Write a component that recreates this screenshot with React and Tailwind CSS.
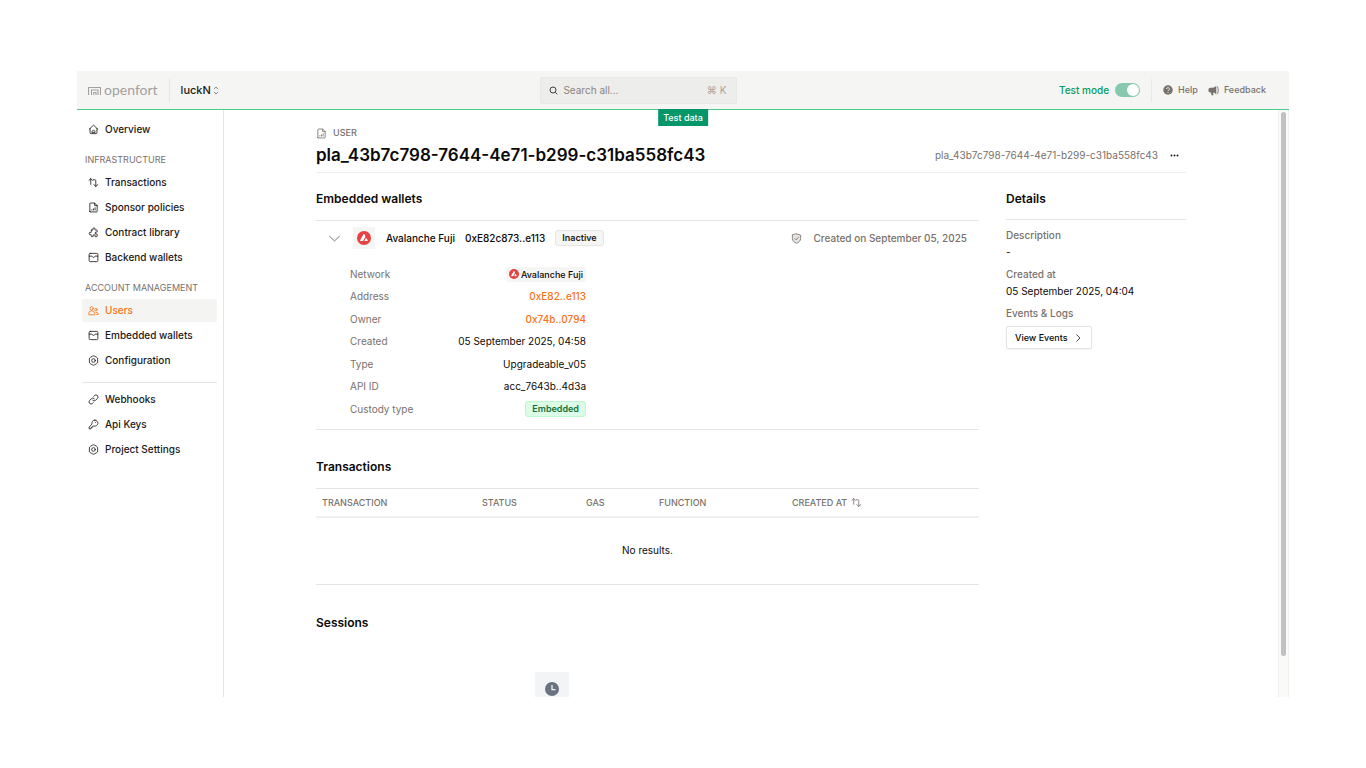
import React from "react";

function Icon({ size = "size-[11px]", className = "", children }) {
  return (
    <svg
      viewBox="0 0 24 24"
      fill="none"
      stroke="currentColor"
      strokeWidth="1.8"
      strokeLinecap="round"
      strokeLinejoin="round"
      aria-hidden="true"
      className={`shrink-0 ${size} ${className}`}
    >
      {children}
    </svg>
  );
}

const HomeIcon = () => (
  <Icon>
    <path d="M2.500 11.500 12 2.500l9.500 9" />
    <path d="M4.500 10v9a2 2 0 0 0 2 2h11a2 2 0 0 0 2-2v-9" />
    <path d="M8.500 17.500c0-2.300 1.500-3.700 3.500-3.700s3.500 1.400 3.500 3.700z" />
  </Icon>
);

const SwapIcon = ({ className }) => (
  <Icon className={className}>
    <path d="M6 16V3.500M2 7.500l4-4 4 4" />
    <path d="M11.500 6H15a2 2 0 0 1 2 2v12.500M12.500 16.500l4.500 4 4.500-4" />
  </Icon>
);

const PageIcon = ({ className }) => (
  <Icon className={className}>
    <path d="M4 20.500V3.500A1.200 1.200 0 0 1 5.200 2.300H14.500L20 7.800v12.700a1.200 1.200 0 0 1-1.200 1.200H5.200A1.200 1.200 0 0 1 4 20.500z" />
    <path d="M14.500 2.500v5.300H20M8.500 17.500v-1M12 17.500V15M15.500 17.500v-5" />
  </Icon>
);

const PuzzleIcon = () => (
  <Icon>
    <path d="M8 6.500h2.200c.6 0 .9-.6.700-1.100a2.300 2.300 0 1 1 4.200 0c-.2.500.1 1.100.7 1.100H19a1 1 0 0 1 1 1v3c0 .6-.6.900-1.100.7a2.200 2.200 0 1 0 0 4c.5-.2 1.100.1 1.100.7V20a1 1 0 0 1-1 1h-3c-.6 0-.9-.6-.7-1.100a2.200 2.200 0 1 0-4 0c.2.500-.1 1.100-.7 1.100H8a1 1 0 0 1-1-1v-2.800c0-.6-.6-.9-1.100-.7a2.300 2.300 0 1 1 0-4.200c.5.200 1.100-.1 1.100-.7V7.500a1 1 0 0 1 1-1z" />
  </Icon>
);

const WalletIcon = () => (
  <Icon>
    <rect x="2.500" y="3" width="19" height="18" rx="2.500" />
    <path d="M2.500 9h6c.5 0 .8.300.9.800.4 1.300 1.300 2 2.600 2s2.200-.7 2.600-2c.1-.5.400-.8.900-.8h6" />
  </Icon>
);

const UsersIcon = () => (
  <Icon>
    <circle cx="8" cy="7.500" r="3.700" />
    <path d="M1.500 20.500v-1.500a6.500 6.500 0 0 1 13 0v1.500z" />
    <circle cx="17.500" cy="10" r="2.700" />
    <path d="M17.500 15.500a5 5 0 0 1 5 5h-4" />
  </Icon>
);

const SettingsIcon = () => (
  <Icon>
    <path d="M10.300 2.200a3.500 3.500 0 0 1 3.400 0l5.600 3.200a3.300 3.300 0 0 1 1.700 2.900v7.400a3.300 3.300 0 0 1-1.700 2.900l-5.600 3.200a3.500 3.500 0 0 1-3.400 0l-5.600-3.200A3.300 3.300 0 0 1 3 15.700V8.300a3.300 3.300 0 0 1 1.700-2.900z" />
    <circle cx="12" cy="12" r="4" />
  </Icon>
);

const LinkIcon = () => (
  <Icon>
    <path d="M13.800 10.200a4.500 4.500 0 0 0-6.400 0l-3.800 3.900a4.500 4.500 0 0 0 6.400 6.400l1.600-1.700" />
    <path d="M10.200 13.800a4.500 4.500 0 0 0 6.400 0l3.800-3.900A4.500 4.500 0 0 0 14 3.500l-1.600 1.700" />
  </Icon>
);

const KeyIcon = () => (
  <Icon>
    <path d="M15 2.500a6.500 6.500 0 0 0-6.200 8.400L2.500 17.500V21.500h4v-2.500h2.500v-2.500l4.100-1.300A6.500 6.500 0 1 0 15 2.500z" />
    <path d="M16.500 7.500h.1" />
  </Icon>
);

function AvalancheLogo({ size }) {
  return (
    <svg viewBox="0 0 28 28" className={`shrink-0 ${size}`} aria-hidden="true">
      <circle cx="14" cy="14" r="14" fill="#e84142" />
      <path
        fill="#fff"
        d="M13 6.600c.5-.9 1.500-.9 2 0l1.500 2.800c.4.800.4 1.600 0 2.400l-4 7.100c-.4.800-1.100 1.200-2 1.200H7.300c-1.100 0-1.600-.8-1-1.800zM17.300 14.900c.5-.8 1.400-.8 1.900 0l2.200 3.600c.5.900.1 1.600-.9 1.600h-4.400c-1.100 0-1.500-.8-.9-1.700z"
      />
    </svg>
  );
}

function NavItem({ icon, children, active }) {
  return (
    <li>
      <a
        href="#"
        aria-current={active ? "page" : undefined}
        className={`flex h-[23px] items-center gap-[6px] rounded-[2px] px-[6px] text-[10px] font-medium ${
          active ? "bg-[#f4f4f3] text-[#f97316]" : "text-[#1c1917]"
        }`}
      >
        {icon}
        {children}
      </a>
    </li>
  );
}

function NavLabel({ children }) {
  return (
    <h2 className="px-[3px] pt-3 pb-[5px] text-[9px] leading-[13px] text-[#78716c] uppercase">
      {children}
    </h2>
  );
}

function Sidebar() {
  return (
    <nav className="w-[147px] shrink-0 border-r border-[#e7e5e4] pt-[8px] pr-[6px] pl-[5px]">
      <ul className="flex flex-col gap-[2px]">
        <NavItem icon={<HomeIcon />}>Overview</NavItem>
      </ul>
      <NavLabel>Infrastructure</NavLabel>
      <ul className="flex flex-col gap-[2px]">
        <NavItem icon={<SwapIcon />}>Transactions</NavItem>
        <NavItem icon={<PageIcon />}>Sponsor policies</NavItem>
        <NavItem icon={<PuzzleIcon />}>Contract library</NavItem>
        <NavItem icon={<WalletIcon />}>Backend wallets</NavItem>
      </ul>
      <NavLabel>Account management</NavLabel>
      <ul className="flex flex-col gap-[2px]">
        <NavItem icon={<UsersIcon />} active>
          Users
        </NavItem>
        <NavItem icon={<WalletIcon />}>Embedded wallets</NavItem>
        <NavItem icon={<SettingsIcon />}>Configuration</NavItem>
      </ul>
      <hr className="mt-[10px] mb-[5px] border-[#e7e5e4]" />
      <ul className="flex flex-col gap-[2px]">
        <NavItem icon={<LinkIcon />}>Webhooks</NavItem>
        <NavItem icon={<KeyIcon />}>Api Keys</NavItem>
        <NavItem icon={<SettingsIcon />}>Project Settings</NavItem>
      </ul>
    </nav>
  );
}

function Header() {
  return (
    <header className="relative flex h-[39px] shrink-0 items-center justify-between border-b border-[#4fca8f] bg-[#f5f5f4] pr-[23px] pl-[11px]">
      <div className="flex items-center">
        <a href="#" className="flex items-center gap-[3px] text-[#a3a09e]">
          <svg viewBox="0 0 26 18" className="h-[9px] w-[13px]" fill="none" stroke="currentColor" strokeWidth="2.200" aria-hidden="true">
            <path d="M1 18V3h24v15" />
            <path d="M7 18V8h13v10" />
            <path d="M11.500 18v-5h4.500v5" />
          </svg>
          <span className="font-['Lato',sans-serif] text-[14px] leading-[18px]">openfort</span>
        </a>
        <span className="mr-[11px] ml-[11px] h-[23px] w-px bg-[#e7e5e4]" />
        <button type="button" className="flex items-center gap-[2px] text-[11px] font-medium text-[#1c1917]">
          luckN
          <svg viewBox="0 0 12 20" className="h-[9px] w-[6px] text-[#78716c]" fill="none" stroke="currentColor" strokeWidth="1.800" aria-hidden="true">
            <path d="M1.500 7 6 2l4.500 5M1.500 13 6 18l4.500-5" />
          </svg>
        </button>
      </div>

      <label className="flex h-[27px] w-[197px] items-center rounded-[2px] border border-[#e9e8e7] bg-[#ededec] px-[8px]">
        <svg viewBox="0 0 18 18" className="size-[9px] shrink-0 text-[#44403c]" fill="none" stroke="currentColor" strokeWidth="2" aria-hidden="true">
          <circle cx="8" cy="8" r="6" />
          <path d="m12.500 12.500 4 4" />
        </svg>
        <input
          type="text"
          aria-label="Search all"
          placeholder="Search all..."
          className="ml-[5px] w-full min-w-0 flex-1 bg-transparent text-[10px] text-[#1c1917] outline-none placeholder:text-[#8a8580]"
        />
        <kbd className="mr-[2px] shrink-0 font-['Inter','DejaVu_Sans',sans-serif] text-[10px] text-[#a8a29e]">⌘ K</kbd>
      </label>

      <div className="flex items-center">
        <label className="flex items-center gap-[6px] text-[10px] font-medium text-[#059a63]">
          Test mode
          <input
            type="checkbox"
            role="switch"
            defaultChecked
            className="flex h-[14px] w-[25px] appearance-none items-center justify-end rounded-full bg-[#87c9ae] px-px before:size-[12px] before:rounded-full before:bg-white before:content-['']"
          />
        </label>
        <span className="mx-[11px] h-[23px] w-px bg-[#ebe9e8]" />
        <div className="flex items-center gap-[10px] text-[9px] font-medium text-[#78716c]">
          <a href="#" className="flex items-center gap-[5px]">
            <svg viewBox="0 0 20 20" className="size-[10px]" aria-hidden="true">
              <circle cx="10" cy="10" r="9.500" fill="#78716c" />
              <path d="M7.200 8a2.800 2.800 0 1 1 4 2.500c-.8.400-1.200.8-1.200 1.700" fill="none" stroke="#f5f5f4" strokeWidth="1.800" />
              <circle cx="10" cy="15" r="1.200" fill="#f5f5f4" />
            </svg>
            Help
          </a>
          <a href="#" className="flex items-center gap-[5px]">
            <svg viewBox="0 0 20 20" className="size-[11px]" fill="#78716c" aria-hidden="true">
              <path d="M15 1.500v15.500c-2-2-4-3.200-6-3.500l1.200 5H6.500L5.200 13.500H4A3.200 3.200 0 0 1 .8 10.300V8.200A3.200 3.200 0 0 1 4 5h4c2.500 0 5-1.300 7-3.500z" />
              <path d="M17 2.500c2.200 4 2.200 9.500 0 13.500" fill="none" stroke="#78716c" strokeWidth="1.600" />
            </svg>
            Feedback
          </a>
        </div>
      </div>

      <div className="absolute top-full left-1/2 -translate-x-1/2 bg-[#059669] px-[5px] text-[9px] leading-[17px] font-medium whitespace-nowrap text-white">
        Test data
      </div>
    </header>
  );
}

function Row({ label, children }) {
  return (
    <div className="flex h-4 items-center justify-between">
      <dt className="text-[#78716c]">{label}</dt>
      <dd className="flex items-center text-[#0c0a09]">{children}</dd>
    </div>
  );
}

function WalletSection() {
  return (
    <section>
      <h2 className="pt-[15px] pb-[10px] text-[12px] leading-[22px] font-semibold text-[#0c0a09]">Embedded wallets</h2>
      <div className="border-y border-[#e7e5e4] pb-[12px]">
        <div className="flex h-[34px] items-center pr-[12px] pl-[12px] text-[10px] font-medium">
          <button type="button" aria-label="Collapse wallet" className="mr-[12px] text-[#78716c]">
            <Icon size="size-[13px]">
              <path d="m3 8 9 8.500L21 8" />
            </Icon>
          </button>
          <span className="flex size-[22px] items-center justify-center bg-[#f5f5f4]">
            <AvalancheLogo size="size-[14px]" />
          </span>
          <span className="ml-[11px] text-[#0c0a09]">Avalanche Fuji</span>
          <span className="ml-[10px] text-[#0c0a09]">0xE82c873..e113</span>
          <span className="ml-[10px] rounded-[3px] border border-[#e7e5e4] bg-[#f5f5f4] px-[6px] text-[9px] leading-[14px] font-semibold text-[#1c1917]">
            Inactive
          </span>
          <span className="ml-auto flex items-center gap-[11px] text-[#78716c]">
            <Icon>
              <path fill="#e7e5e4" d="M12 2 21 4.500V12c0 5-4 8.500-9 10.500C7 20.500 3 17 3 12V4.500z" />
              <path d="m8 12 3 3 5.500-6" />
            </Icon>
            Created on September 05, 2025
          </span>
        </div>
        <dl className="mt-[11px] ml-[34px] flex min-h-[151px] w-[236px] flex-col justify-between text-[10px]">
          <Row label="Network">
            <span className="flex items-center gap-[2px] rounded-[3px] bg-[#f5f5f4] px-[3px] text-[9px] leading-[15px] font-medium">
              <AvalancheLogo size="size-[10px]" />
              Avalanche Fuji
            </span>
          </Row>
          <Row label="Address">
            <a href="#" className="font-medium text-[#f97316]">0xE82..e113</a>
          </Row>
          <Row label="Owner">
            <a href="#" className="font-medium text-[#f97316]">0x74b..0794</a>
          </Row>
          <Row label="Created">05 September 2025, 04:58</Row>
          <Row label="Type">Upgradeable_v05</Row>
          <Row label="API ID">acc_7643b..4d3a</Row>
          <Row label="Custody type">
            <span className="rounded-[3px] border border-[#bbf7d0] bg-[#dcfce7] px-[6px] text-[9px] leading-[14px] font-semibold text-[#15703a]">
              Embedded
            </span>
          </Row>
        </dl>
      </div>
    </section>
  );
}

function TransactionsSection() {
  return (
    <section className="mt-[15px]">
      <h2 className="pt-[11px] pb-[10px] text-[12px] leading-[22px] font-semibold text-[#0c0a09]">Transactions</h2>
      <table className="w-full table-fixed border-collapse text-left">
        <thead>
          <tr className="h-[28px] border-t border-b-2 border-[#e7e5e4] border-b-[#f0efee] text-[9px] text-[#78716c] uppercase">
            <th className="w-[160px] pl-[6px] font-medium">Transaction</th>
            <th className="w-[104px] pl-[6px] font-medium">Status</th>
            <th className="w-[73px] pl-[6px] font-medium">Gas</th>
            <th className="w-[133px] pl-[6px] font-medium">Function</th>
            <th className="pl-[6px] font-medium">
              <button type="button" className="flex items-center gap-[4px] uppercase">
                Created at
                <SwapIcon />
              </button>
            </th>
          </tr>
        </thead>
        <tbody>
          <tr className="h-[68px] border-b border-[#e7e5e4]">
            <td colSpan={5} className="text-center text-[10px] text-[#0c0a09]">
              No results.
            </td>
          </tr>
        </tbody>
      </table>
    </section>
  );
}

function SessionsSection() {
  return (
    <section className="mt-[16px]">
      <h2 className="pt-[11px] pb-[10px] text-[12px] leading-[22px] font-semibold text-[#0c0a09]">Sessions</h2>
      <div className="mt-[28px] ml-[219px] flex size-[34px] items-center justify-center rounded-[2px] bg-[#f3f4f6]">
        <svg viewBox="0 0 28 28" className="size-[14px]" aria-hidden="true">
          <circle cx="14" cy="14" r="14" fill="#6b7280" />
          <path d="M14 6v9h7" fill="none" stroke="#f3f4f6" strokeWidth="2.500" />
        </svg>
      </div>
    </section>
  );
}

function Details() {
  return (
    <aside className="w-[180px] shrink-0 text-[10px] leading-[17px]">
      <h2 className="border-b border-[#e7e5e4] pt-[15px] pb-[9px] text-[12px] leading-[22px] font-semibold text-[#0c0a09]">Details</h2>
      <dl className="pt-[7px] text-[#0c0a09]">
        <dt className="font-medium text-[#78716c]">Description</dt>
        <dd>-</dd>
        <dt className="mt-[5px] font-medium text-[#78716c]">Created at</dt>
        <dd>05 September 2025, 04:04</dd>
        <dt className="mt-[5px] font-medium text-[#78716c]">Events &amp; Logs</dt>
        <dd className="mt-[4px]">
          <button
            type="button"
            className="flex h-[23px] items-center gap-[5px] rounded-[2px] border border-[#e7e5e4] bg-white px-[8px] text-[9px] font-medium shadow-xs"
          >
            View Events
            <Icon size="size-[10px]">
              <path d="m9 4 7.500 8L9 20" />
            </Icon>
          </button>
        </dd>
      </dl>
    </aside>
  );
}

export default function App() {
  return (
    <div className="h-screen bg-white px-[77px] py-[71px] font-['Inter',sans-serif] text-[#1c1917] antialiased">
      <div className="flex h-full flex-col overflow-hidden">
        <Header />
        <div className="flex min-h-0 flex-1">
          <Sidebar />
          <main className="min-w-0 flex-1 overflow-hidden px-[92px] pt-[15px]">
            <div className="flex items-center gap-[6px] text-[9px] leading-[16px] font-medium text-[#78716c]">
              <PageIcon />
              USER
            </div>
            <div className="flex items-center justify-between border-b border-[#efeeed] pb-[3px]">
              <h1 className="text-[17px] leading-[28px] font-semibold text-[#0c0a09]">
                pla_43b7c798-7644-4e71-b299-c31ba558fc43
              </h1>
              <div className="flex items-center gap-[11px] pr-[6px] text-[10px] text-[#78716c]">
                pla_43b7c798-7644-4e71-b299-c31ba558fc43
                <button type="button" aria-label="More actions" className="text-[#1c1917]">
                  <svg viewBox="0 0 22 22" className="size-[11px]" fill="currentColor" aria-hidden="true">
                    <circle cx="5" cy="11" r="1.900" />
                    <circle cx="11" cy="11" r="1.900" />
                    <circle cx="17" cy="11" r="1.900" />
                  </svg>
                </button>
              </div>
            </div>
            <div className="flex items-start gap-[27px]">
              <div className="min-w-0 flex-1">
                <WalletSection />
                <TransactionsSection />
                <SessionsSection />
              </div>
              <Details />
            </div>
          </main>
          <div className="w-[11px] shrink-0 border-x border-[#f0efee] bg-[#fafaf9] px-[2px] pt-[2px]">
            <div className="h-[93%] rounded-full bg-[#c1c1c1]" />
          </div>
        </div>
      </div>
    </div>
  );
}
